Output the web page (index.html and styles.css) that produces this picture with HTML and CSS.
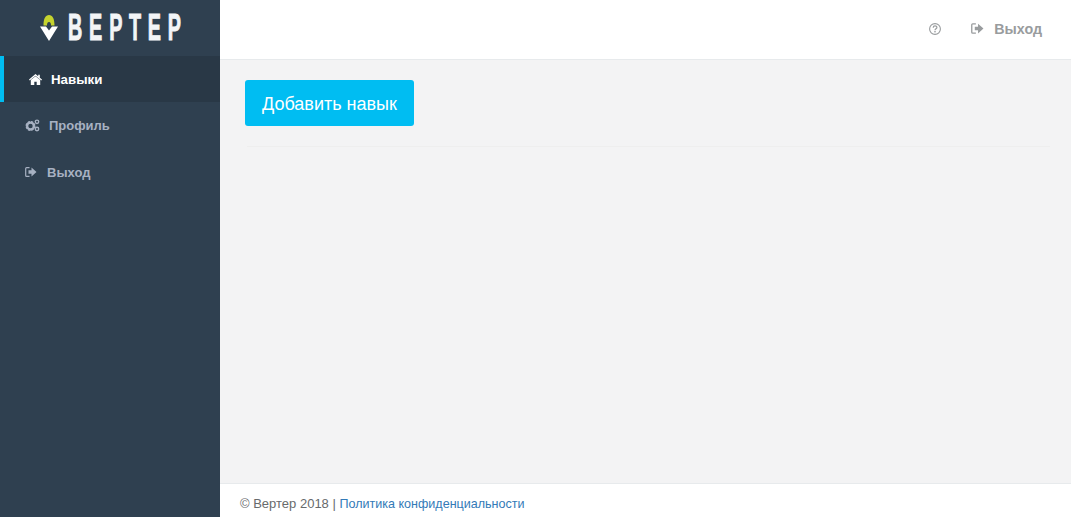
FILE: index.html
```html
<!DOCTYPE html>
<html lang="en">
<head>
    <meta charset="UTF-8">
    <meta name="viewport" content="width=device-width, initial-scale=1.0">
    <link rel="stylesheet" href="styles.css">
    <title>Вертер</title>
</head>
<body>
    <div class="wrapper">
        <aside class="sidebar">
            <div class="logo">
                <svg class="logo-mark" width="18" height="26" viewBox="0 0 18 26">
                    <path d="M3.500 10.500 C3.500 3.500 5.500 0 9 0 C12.500 0 14.500 3.500 14.500 10.500 L11 10.500 C11 8.500 10.500 7 9 7 C7.500 7 7 8.500 7 10.500 Z" fill="#c5d32e"/>
                    <path d="M0 11.500 L6 11.500 L9 15.500 L12 11.500 L18 11.500 L9 26 Z" fill="#fff"/>
                </svg>
                <span class="logo-text">ВЕРТЕР</span>
            </div>
            <nav class="menu">
                <a class="menu-item active" href="#">
                    <svg class="icon" width="13" height="11" viewBox="0 0 13 11"><path d="M6.500 0 L9.200 2.300 V0.800 H10.800 V3.700 L13 5.600 L12.300 6.500 L6.500 1.700 L0.700 6.500 L0 5.600 Z M1.800 6 L6.500 2.200 L11.200 6 V11 H7.700 V7.800 H5.300 V11 H1.800 Z" fill="currentColor"/></svg>
                    <span>Навыки</span>
                </a>
                <a class="menu-item profile" href="#">
                    <svg class="icon" width="15" height="13" viewBox="0 0 15 13"><circle cx="5.500" cy="7" r="3.700" fill="none" stroke="currentColor" stroke-width="2.600" stroke-dasharray="2 0.900"/><circle cx="5.500" cy="7" r="3.400" fill="none" stroke="currentColor" stroke-width="2.200"/><circle cx="12" cy="2.800" r="1.700" fill="none" stroke="currentColor" stroke-width="1.400"/><circle cx="12" cy="10" r="1.700" fill="none" stroke="currentColor" stroke-width="1.400"/></svg>
                    <span>Профиль</span>
                </a>
                <a class="menu-item logout" href="#">
                    <svg class="icon" width="12" height="10" viewBox="0 0 12 10"><path d="M4.500 0.700 H1.600 Q0.700 0.700 0.700 1.600 V8.400 Q0.700 9.300 1.600 9.300 H4.500" fill="none" stroke="currentColor" stroke-width="1.200"/><path d="M3.500 3.300 H6.500 V0.500 L11.500 5 L6.500 9.500 V6.700 H3.500 Z" fill="currentColor"/></svg>
                    <span>Выход</span>
                </a>
            </nav>
        </aside>
        <div class="main">
            <header class="topbar">
                <a class="top-link help" href="#">
                    <svg width="12" height="12" viewBox="0 0 12 12"><circle cx="6" cy="6" r="5.400" fill="none" stroke="currentColor" stroke-width="1.100"/><path d="M4.200 4.700 C4.200 2.400 7.900 2.400 7.900 4.500 C7.900 5.800 6 5.800 6 7.200" fill="none" stroke="currentColor" stroke-width="1.200"/><rect x="5.300" y="8" width="1.400" height="1.400" fill="currentColor"/></svg>
                </a>
                <a class="top-link" href="#">
                    <svg width="13" height="11" viewBox="0 0 12 10"><path d="M4.500 0.700 H1.600 Q0.700 0.700 0.700 1.600 V8.400 Q0.700 9.300 1.600 9.300 H4.500" fill="none" stroke="currentColor" stroke-width="1.200"/><path d="M3.500 3.300 H6.500 V0.500 L11.500 5 L6.500 9.500 V6.700 H3.500 Z" fill="currentColor"/></svg>
                    <span>Выход</span>
                </a>
            </header>
            <main class="content">
                <button class="add-button">Добавить навык</button>
                <hr class="divider">
            </main>
            <footer class="footer">
                © Вертер 2018 | <a href="#">Политика конфиденциальности</a>
            </footer>
        </div>
    </div>
</body>
</html>
```
FILE: styles.css
```css
* {
    box-sizing: border-box;
}

html, body {
    height: 100%;
    margin: 0;
    overflow: hidden;
}

body {
    font-family: "Liberation Sans", Arial, sans-serif;
    font-size: 14px;
    color: #676a6c;
}

a {
    text-decoration: none;
}

.wrapper {
    display: flex;
    height: 100%;
}

.sidebar {
    flex: 0 0 220px;
    background: #2f4050;
}

.logo {
    display: flex;
    align-items: center;
    gap: 10px;
    height: 56px;
    padding-left: 40px;
}

.logo-text {
    width: 113px;
    font-size: 36px;
    font-weight: 700;
    letter-spacing: 12.400px;
    line-height: 1;
    color: #f3f5f7;
    white-space: nowrap;
    -webkit-text-stroke: 1px #f3f5f7;
    transform: scaleX(.55);
    transform-origin: left center;
}

.menu {
    display: flex;
    flex-direction: column;
}

.menu-item {
    display: flex;
    align-items: center;
    height: 46px;
    padding-left: 25px;
    font-size: 13px;
    font-weight: 700;
    color: #a7b1c2;
}

.menu-item.active {
    border-left: 4px solid #00bdf2;
    background: #293846;
    color: #fff;
    font-size: 13.300px;
}

.menu-item.active .icon {
    margin-right: 9px;
}

.profile .icon {
    margin-right: 9px;
}

.logout {
    margin-top: 1px;
}

.logout .icon {
    margin-right: 10px;
}

.main {
    flex: 1;
    display: flex;
    flex-direction: column;
    min-width: 0;
    background: #f3f3f4;
}

.topbar {
    display: flex;
    align-items: center;
    justify-content: flex-end;
    gap: 30px;
    height: 60px;
    padding: 0 29px 2px 0;
    background: #fff;
    border-bottom: 1px solid #e7eaec;
}

.top-link {
    display: flex;
    align-items: center;
    gap: 10px;
    font-size: 14.300px;
    font-weight: 700;
    color: #999c9e;
}

.content {
    flex: 1;
    padding: 20px 21px 0 25px;
}

.add-button {
    display: block;
    width: 169px;
    height: 46px;
    padding: 2px 0 0;
    border: 0;
    border-radius: 3px;
    background: #00bdf2;
    color: #fff;
    font-family: inherit;
    font-size: 18px;
}

.divider {
    height: 0;
    margin: 20px 0 0 2px;
    border: 0;
    border-top: 1px solid #eeeeee;
}

.footer {
    height: 34px;
    padding: 13px 20px 0;
    background: #fff;
    border-top: 1px solid #e7eaec;
    font-size: 13px;
    line-height: 14px;
}

.footer a {
    font-size: 12.560px;
    color: #337ab7;
}
```
